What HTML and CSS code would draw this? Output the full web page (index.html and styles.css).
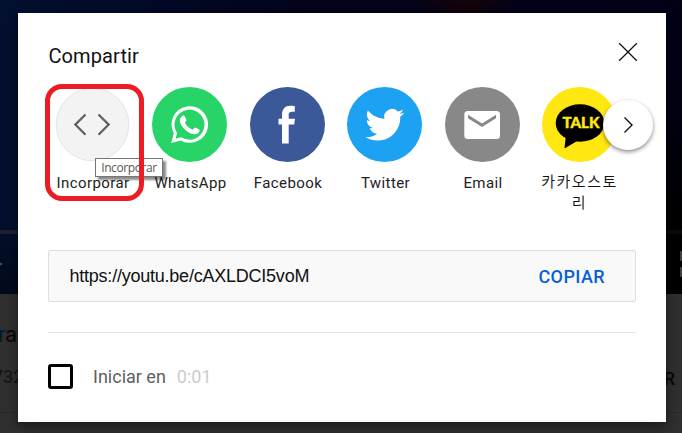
FILE: index.html
```
<!DOCTYPE html>
<html lang="es">
<head>
<meta charset="utf-8">
<title>Compartir</title>
<link rel="stylesheet" href="styles.css">
</head>
<body>
<div class="page">
  <div class="video">
    <div class="progress"></div>
    <div class="controls">
      <svg width="4" height="10" viewBox="0 0 4 10"><path d="M0 3.500 3 5 0 6.500z" fill="#4c5263"/></svg>
      <svg width="2" height="26" viewBox="0 0 2 26"><path d="M0 0h2v10H0zM0 16h2v10H0z" fill="#3e3e3e"/></svg>
    </div>
  </div>
  <div class="video-title"><span class="hash">r</span>a</div>
  <div class="meta"><span class="views">732</span><span class="save">R</span></div>
</div>
<main class="dialog">
  <header class="head">
    <h1>Compartir</h1>
    <svg class="close" width="20" height="20" viewBox="0 0 20 20"><path d="M1.200 1.200 18.800 18.800M18.800 1.200 1.200 18.800" fill="none" stroke="#111" stroke-width="1.300"/></svg>
  </header>
  <div class="targets">
    <div class="target">
      <svg class="disc" viewBox="0 0 75 75"><circle cx="37.500" cy="37.500" r="36.300" fill="#f3f3f3" stroke="#e4e4e4"/><path d="M30.500 27.500 20.300 37.600 30.500 47.700M43.500 27.500 53.700 37.600 43.500 47.700" fill="none" stroke="#606060" stroke-width="2.200"/></svg>
      <span>Incorporar</span>
      <div class="highlight"></div>
      <div class="tooltip">Incorporar</div>
    </div>
    <div class="target">
      <svg class="disc" viewBox="0 0 75 75"><circle cx="37.500" cy="37.500" r="37.500" fill="#28d468"/><path d="M19.200 56 21.800 46.400A18.300 18.300 0 1 1 28.700 53.400z" fill="#fff"/><path d="M23.500 51.700 25.100 46.100A15 15 0 1 1 29.300 50.200z" fill="#28d468"/><path d="M30.300 28.900C31 28.300 32.400 28.300 32.900 29.400L34.400 33C34.700 33.900 32.800 35.400 33 36 34.800 39.300 37.100 41.300 40.500 42.600 41.300 42.800 42.600 40.200 43.500 40.500L47.300 42.400C48.100 43 47.400 45.200 46.100 46.200 42.600 48.900 36.800 46.300 33.100 42.700 29.600 39.300 27.500 36 27.800 33 28 31.100 29.200 29.700 30.300 28.900z" fill="#fff"/></svg>
      <span>WhatsApp</span>
    </div>
    <div class="target">
      <svg class="disc" viewBox="0 0 75 75"><circle cx="37.500" cy="37.500" r="37.500" fill="#3b5998"/><path d="M32 56.500V37.500H28.500V31.800H32V28C32 22 35 18.700 40.500 18.700 42.600 18.700 44.800 19 44.800 19V24.700H42C39.500 24.700 38.700 26 38.700 27.800V31.800H45L44.200 37.500H38.700V56.500z" fill="#fff"/></svg>
      <span>Facebook</span>
    </div>
    <div class="target">
      <svg class="disc" viewBox="0 0 75 75"><circle cx="37.500" cy="37.500" r="37.500" fill="#1da1f2"/><path transform="translate(18.300 18.300) scale(1.620)" d="M23.953 4.570a10 10 0 0 1-2.825.775 4.958 4.958 0 0 0 2.163-2.723c-.951.555-2.005.959-3.127 1.184a4.920 4.920 0 0 0-8.384 4.482C7.690 8.095 4.067 6.130 1.640 3.162a4.822 4.822 0 0 0-.666 2.475c0 1.710.870 3.213 2.188 4.096a4.904 4.904 0 0 1-2.228-.616v.060a4.923 4.923 0 0 0 3.946 4.827 4.996 4.996 0 0 1-2.212.085 4.936 4.936 0 0 0 4.604 3.417 9.867 9.867 0 0 1-6.102 2.105c-.390 0-.779-.023-1.170-.067a13.995 13.995 0 0 0 7.557 2.209c9.053 0 13.998-7.496 13.998-13.985 0-.210 0-.420-.015-.630A9.935 9.935 0 0 0 24 4.590z" fill="#fff"/></svg>
      <span>Twitter</span>
    </div>
    <div class="target">
      <svg class="disc" viewBox="0 0 75 75"><circle cx="37.500" cy="37.500" r="37.500" fill="#888"/><rect x="19.300" y="24" width="35.700" height="28" rx="3.500" fill="#fff"/><path d="M23 27.700 37 36.500 51 27.700V31.200L37 40 23 31.200z" fill="#888"/></svg>
      <span>Email</span>
    </div>
    <div class="target">
      <svg class="disc" viewBox="0 0 75 75"><circle cx="37.500" cy="37.500" r="37.500" fill="#ffe812"/><ellipse cx="38" cy="36" rx="24.300" ry="18.800"/><path d="M24 48 22.500 60.200C22.400 61.500 23.100 61.200 23.800 60.700L36 53.500z"/><text class="talk" x="38.900" y="41" text-anchor="middle" textLength="37" lengthAdjust="spacingAndGlyphs">TALK</text></svg>
      <span class="korean">카카오스토리</span>
    </div>
    <div class="next"><svg width="12" height="18" viewBox="0 0 12 18"><path d="M2.500 1.500 10 9 2.500 16.500" fill="none" stroke="#111" stroke-width="1.400"/></svg></div>
  </div>
  <div class="link">
    <span class="url">https://youtu.be/cAXLDCI5voM</span>
    <span class="copy">COPIAR</span>
  </div>
  <div class="start">
    <span class="box"></span>
    <span class="label">Iniciar en</span>
    <span class="time">0:01</span>
  </div>
</main>
</body>
</html>
```
FILE: styles.css
```
* { box-sizing: border-box; }
body {
  margin: 0;
  width: 682px;
  height: 433px;
  overflow: hidden;
  display: grid;
  font-family: Roboto, "Noto Sans CJK KR", sans-serif;
  background: #303030;
}
.page, .dialog { grid-area: 1 / 1; }
.page { height: 433px; overflow: hidden; }
.video {
  height: 294px;
  padding-top: 230px;
  background:
    radial-gradient(ellipse 55px 35px at 465px 0, #160308, transparent),
    linear-gradient(to bottom, transparent 75%, rgba(0, 0, 0, .4)),
    linear-gradient(to bottom, transparent 30%, #000 75%) right / 40px 100% no-repeat,
    linear-gradient(to right, #03102f, #03031c 45%, #020219 96%, #020214);
}
.progress { height: 4px; background: linear-gradient(to right, #1b2131 50%, #0b0b0f 90%); }
.controls { display: flex; justify-content: space-between; padding-top: 17px; }
.controls svg:first-child { margin-top: 8px; }
.video-title { height: 64px; padding-top: 28px; font-size: 22px; line-height: 26px; color: #080808; margin-left: -2px; }
.hash { color: #06192a; }
.meta {
  display: flex;
  justify-content: space-between;
  height: 55px;
  padding: 7px 7px 0 0;
  font-size: 18px;
  line-height: 24px;
  color: #131313;
  border-bottom: 1px solid #292929;
}
.views { margin-left: -7px; }
.save { font-weight: 500; color: #080808; padding-top: 2px; }
.dialog {
  position: relative;
  width: 648px;
  height: 409px;
  margin: 13px 0 0 18px;
  padding: 26px 30px 0;
  background: #fff;
  box-shadow: 0 8px 16px rgba(0, 0, 0, .3), 0 2px 6px rgba(0, 0, 0, .2);
}
.head { display: flex; justify-content: space-between; height: 48px; padding-left: .5px; }
h1 { margin: 0; font-size: 20px; line-height: 34px; font-weight: 400; letter-spacing: .1px; color: #111; }
.close { margin: 3px -2px 0 0; }
.targets { position: relative; display: flex; gap: 22.500px; height: 163px; padding-left: 6.500px; }
.target { position: relative; width: 75px; flex: none; text-align: center; }
.disc { display: block; width: 75px; height: 75px; margin-bottom: 11px; }
.target span {
  display: block;
  margin: 0 -5px;
  padding: 0 3px 0 5px;
  font-size: 15px;
  line-height: 21px;
  letter-spacing: .4px;
  color: #222;
}
.target .korean { font-weight: 350; letter-spacing: 1.500px; margin: -1px -5px 0; padding: 0 2px; color: #111; }
.talk { font: 900 14.500px Lato, sans-serif; fill: #ffe812; stroke: #ffe812; stroke-width: .4px; }
.highlight {
  position: absolute;
  z-index: 3;
  left: -9.500px;
  top: -3px;
  width: 99px;
  height: 117px;
  border: 5px solid #ed1c24;
  border-radius: 17px;
}
.tooltip {
  position: absolute;
  z-index: 2;
  left: 40.500px;
  top: 71px;
  width: 68px;
  height: 19px;
  border: 1px solid #767676;
  background: #fff;
  box-shadow: 3px 3px 2px rgba(0, 0, 0, .45);
  font: 12px/17px "Open Sans", sans-serif;
  letter-spacing: -.4px;
  color: #575757;
}
.next {
  position: absolute;
  left: 555px;
  top: 13px;
  width: 50px;
  height: 50px;
  display: grid;
  place-items: center;
  border-radius: 50%;
  background: #fff;
  box-shadow: 0 2px 4px rgba(0, 0, 0, .45);
}
.link {
  display: flex;
  justify-content: space-between;
  align-items: center;
  height: 52px;
  padding: 0 30px 0 20.500px;
  border: 1px solid #dedede;
  border-radius: 2px;
  background: #f9f9f9;
}
.url { font: 18px "Liberation Sans", sans-serif; letter-spacing: -.230px; color: #111; }
.copy { font-size: 18px; font-weight: 500; letter-spacing: .4px; color: #065fd4; }
.start {
  display: flex;
  align-items: center;
  margin-top: 30px;
  height: 88px;
  border-top: 1px solid #e2e2e2;
  font-size: 18px;
}
.box { width: 25px; height: 25px; border: 3px solid #000; border-radius: 3px; }
.label { margin-left: 20px; color: #606060; }
.time { margin-left: 11px; color: #ccc; }
```
